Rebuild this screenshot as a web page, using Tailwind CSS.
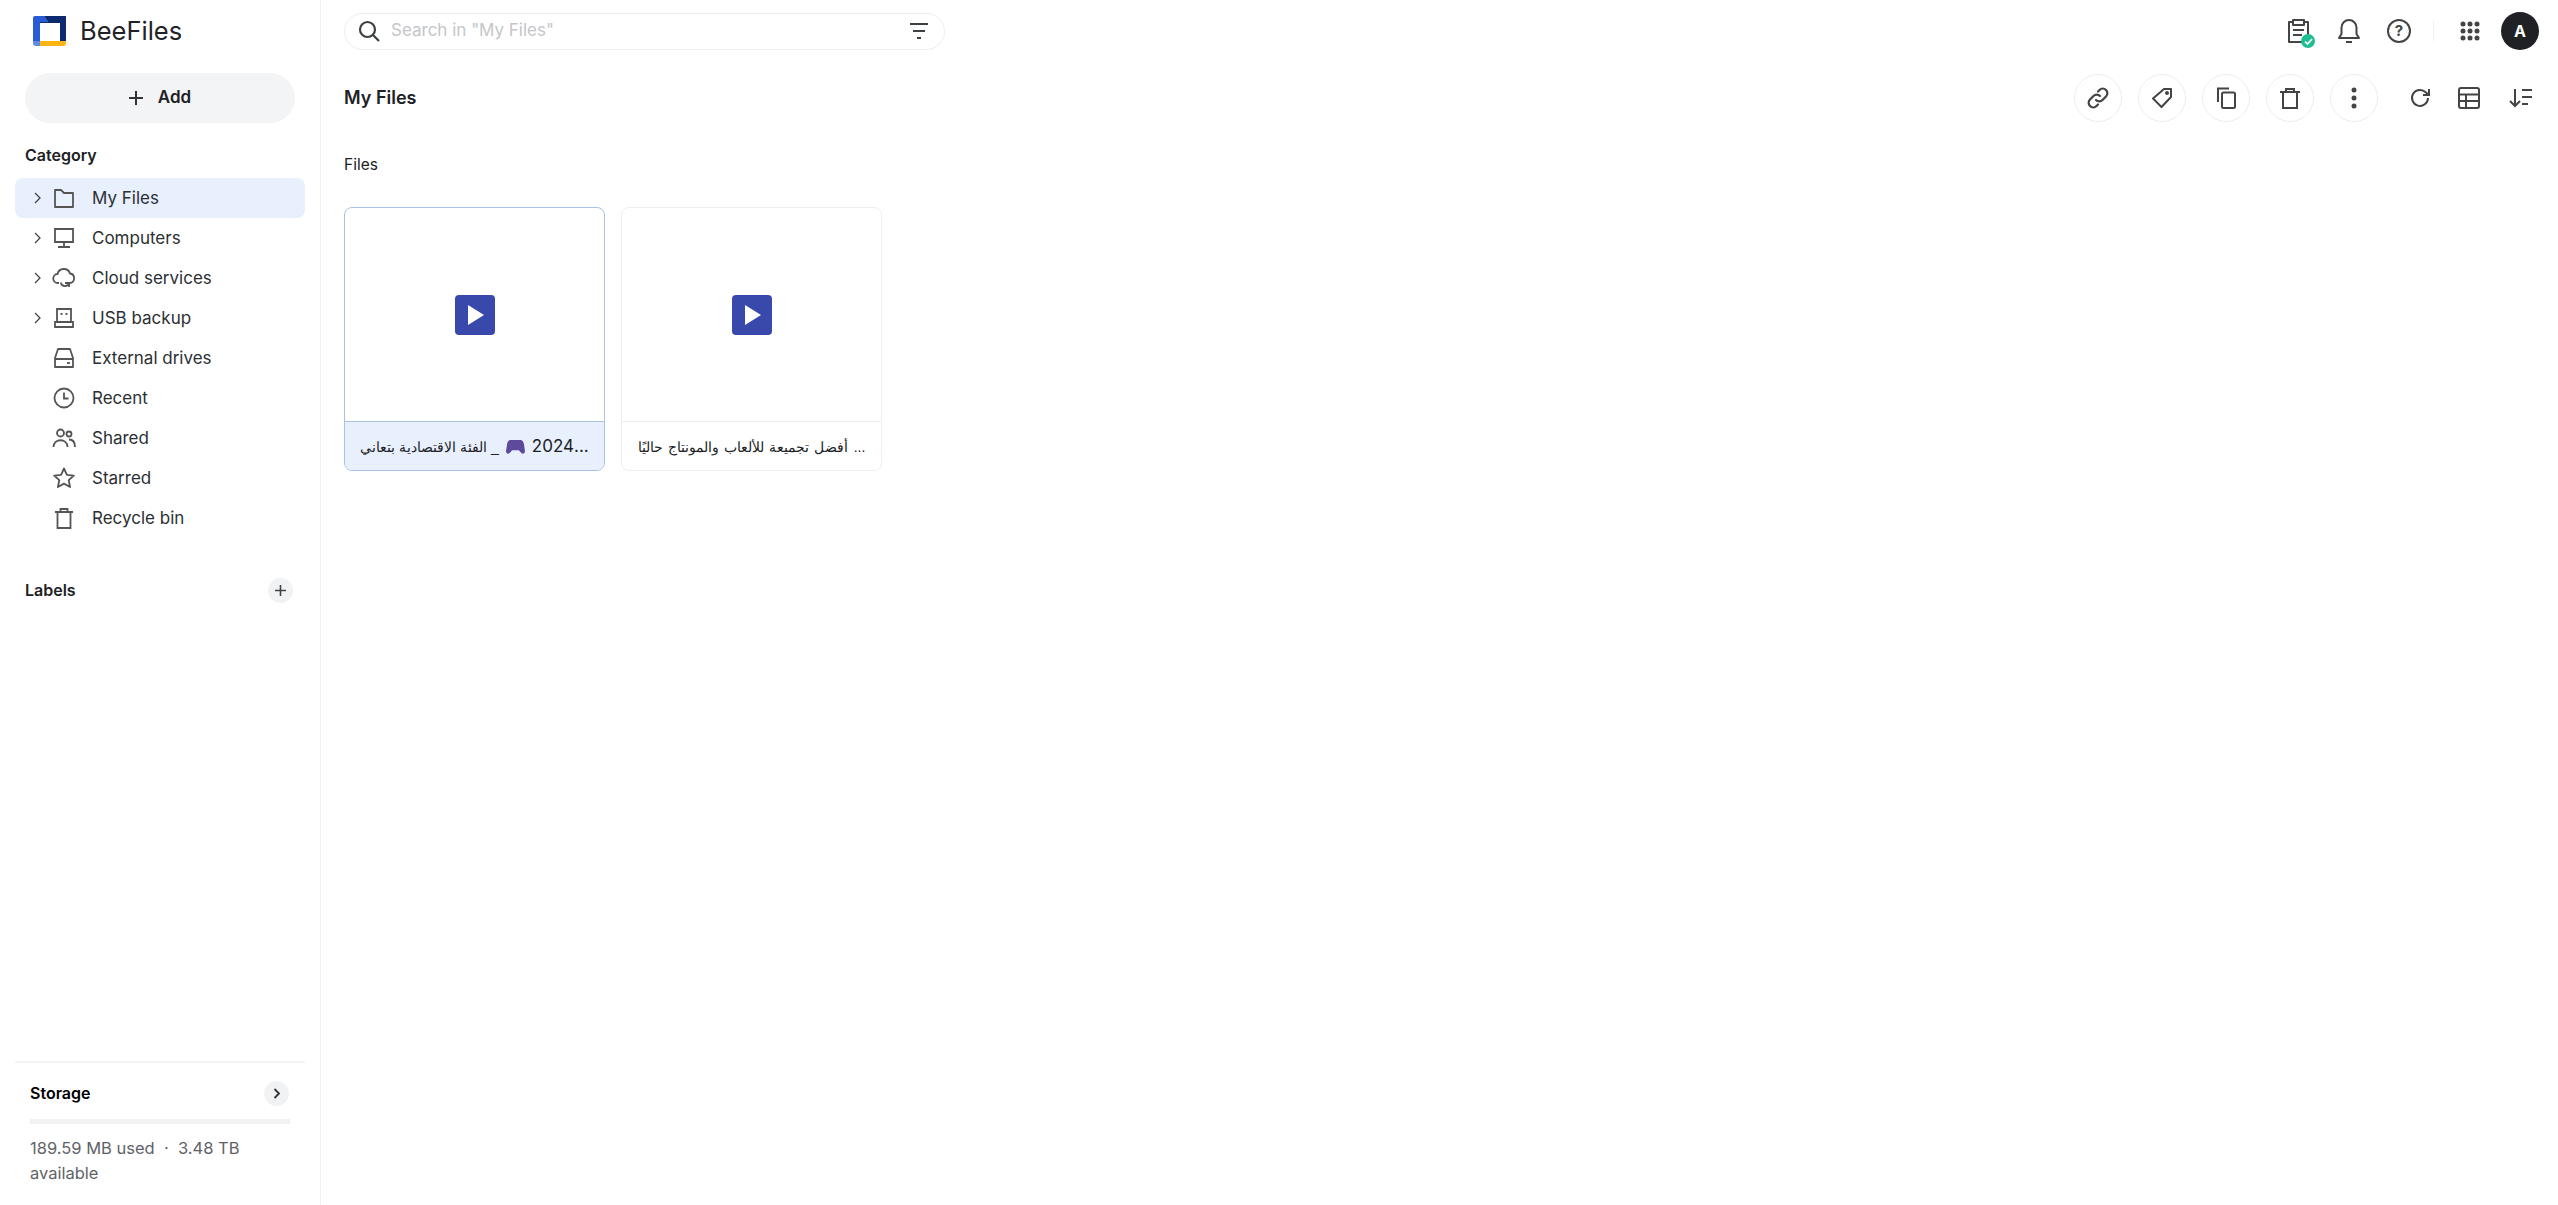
<!DOCTYPE html>
<html lang="en">
  <head>
    <meta charset="UTF-8" />
    <title>BeeFiles</title>
    <script src="https://cdn.jsdelivr.net/npm/@tailwindcss/browser@4"></script>
  </head>
  <body class="h-screen overflow-hidden bg-white text-[#202124] font-[family-name:Inter,sans-serif]">
    <div class="flex h-[1205px]">
      <!-- Sidebar -->
      <aside class="w-[321px] shrink-0 border-r border-[#f1f2f4] flex flex-col">
        <div class="h-[62px] flex items-center pl-[33px] gap-[14px]">
          <svg width="33" height="30" viewBox="0 0 33 30">
            <path d="M0 2a2 2 0 0 1 2-2h9l4 6H7v19H0z" fill="#2a5bd7" />
            <path d="M11 0h22v25h-6V7H7V6h8z" fill="#0b2a6f" />
            <path d="M7 25h26v2a3 3 0 0 1-3 3H7z" fill="#fdb515" />
            <path d="M0 25h7v5H3a3 3 0 0 1-3-3z" fill="#5f8be8" />
          </svg>
          <span class="text-[25.5px] leading-8 text-[#1f2328]">BeeFiles</span>
        </div>
        <div class="px-[25px] mt-[11px]">
          <button class="w-[270px] h-[50px] rounded-full bg-[#f3f4f6] flex items-center justify-center gap-[13px] font-semibold text-[17px] pr-[2px]">
            <svg width="18" height="18" viewBox="0 0 18 18" stroke="#333" stroke-width="2" fill="none"><path d="M9 2v14M2 9h14" /></svg>
            Add
          </button>
        </div>
        <div class="px-[25px] mt-[20px] h-[24px] leading-6 font-semibold text-[16px]">Category</div>
        <nav class="mt-[11px] px-[15px] flex flex-col text-[17px] text-[#2b2f33]">
          <a class="h-[40px] rounded-lg bg-[#e8f0fe] flex items-center">
            <svg class="ml-[19px] mr-[11px]" width="8" height="14" viewBox="0 0 8 14" fill="none" stroke="#444" stroke-width="1.3"><path d="M1 2l5 5-5 5" /></svg>
            <svg width="22" height="22" viewBox="0 0 22 22" fill="none" stroke="#555" stroke-width="1.8"><path d="M2 3h6l3 3h9v14H2z" stroke-linejoin="round" /></svg>
            <span class="ml-[17px] mt-[1px]">My Files</span>
          </a>
          <a class="h-[40px] flex items-center">
            <svg class="ml-[19px] mr-[11px]" width="8" height="14" viewBox="0 0 8 14" fill="none" stroke="#444" stroke-width="1.3"><path d="M1 2l5 5-5 5" /></svg>
            <svg width="22" height="22" viewBox="0 0 22 22" fill="none" stroke="#555" stroke-width="1.8"><path d="M2 2h18v13H2zM11 15v5M5 20h12" /></svg>
            <span class="ml-[17px] mt-[1px]">Computers</span>
          </a>
          <a class="h-[40px] flex items-center">
            <svg class="ml-[19px] mr-[11px]" width="8" height="14" viewBox="0 0 8 14" fill="none" stroke="#444" stroke-width="1.3"><path d="M1 2l5 5-5 5" /></svg>
            <svg width="24" height="22" viewBox="0 0 24 22" fill="none" stroke="#555" stroke-width="1.8" class="-mx-[1px]"><path d="M7 16H6a4.5 4.5 0 0 1-.5-9A6.5 6.5 0 0 1 18 6.500a4.800 4.800 0 0 1 0 9.500h-1M9 15.500c0 4 6 5 8 1M17 20v-4h-4" /></svg>
            <span class="ml-[17px] mt-[1px]">Cloud services</span>
          </a>
          <a class="h-[40px] flex items-center">
            <svg class="ml-[19px] mr-[11px]" width="8" height="14" viewBox="0 0 8 14" fill="none" stroke="#444" stroke-width="1.3"><path d="M1 2l5 5-5 5" /></svg>
            <svg width="22" height="22" viewBox="0 0 22 22" fill="none" stroke="#555" stroke-width="1.8"><path d="M4 2h14v13H4zM2 15h18v5H2z" /><path d="M8.500 6v2M13.500 6v2" /></svg>
            <span class="ml-[17px] mt-[1px]">USB backup</span>
          </a>
          <a class="h-[40px] flex items-center pl-[38px]">
            <svg width="22" height="22" viewBox="0 0 22 22" fill="none" stroke="#555" stroke-width="1.8"><path d="M5 2h12l3 9v9H2v-9zM2 12h18" stroke-linejoin="round" /><path d="M14 16h3" /></svg>
            <span class="ml-[17px] mt-[1px]">External drives</span>
          </a>
          <a class="h-[40px] flex items-center pl-[38px]">
            <svg width="22" height="22" viewBox="0 0 22 22" fill="none" stroke="#555" stroke-width="1.8"><circle cx="11" cy="11" r="9.500" /><path d="M11 5.500V11.500h4.500" /></svg>
            <span class="ml-[17px] mt-[1px]">Recent</span>
          </a>
          <a class="h-[40px] flex items-center pl-[38px]">
            <svg width="22" height="22" viewBox="0 0 22 22" fill="none" stroke="#555" stroke-width="1.8" class="overflow-visible"><circle cx="7.500" cy="6" r="3.500" /><circle cx="16" cy="7" r="2.500" /><path d="M0.500 20c0-9 14-9 14 0M16 12.500c3.500 0 6 2.500 6 7.500" /></svg>
            <span class="ml-[17px] mt-[1px]">Shared</span>
          </a>
          <a class="h-[40px] flex items-center pl-[38px]">
            <svg width="22" height="22" viewBox="0 0 22 22" fill="none" stroke="#555" stroke-width="1.8" class="overflow-visible"><path d="M11 1.500l2.900 6.300 6.900.8-5.100 4.600 1.400 6.800-6.100-3.400-6.100 3.400 1.400-6.800-5.100-4.600 6.900-.8z" stroke-linejoin="round" /></svg>
            <span class="ml-[17px] mt-[1px]">Starred</span>
          </a>
          <a class="h-[40px] flex items-center pl-[38px]">
            <svg width="22" height="22" viewBox="0 0 22 22" fill="none" stroke="#555" stroke-width="1.8"><path d="M2 5h18M7.500 5V2h7v3M4.500 5v16h13V5" /></svg>
            <span class="ml-[17px] mt-[1px]">Recycle bin</span>
          </a>
        </nav>
        <div class="mt-[39px] pl-[25px] pr-[27px] flex items-center justify-between h-[26px]">
          <span class="font-semibold text-[16px]">Labels</span>
          <span class="w-[25px] h-[25px] rounded-full bg-[#f1f2f4] flex items-center justify-center">
            <svg width="11" height="11" viewBox="0 0 11 11" stroke="#444" stroke-width="1.600"><path d="M5.500 0v11M0 5.500h11" /></svg>
          </span>
        </div>
        <div class="mt-auto mx-[15px] border-t-2 border-[#f3f4f6] h-[144px] px-[15px]">
          <div class="flex items-center justify-between mt-[17px] h-[26px]">
            <span class="font-semibold text-[16px] text-black">Storage</span>
            <span class="w-[25px] h-[25px] rounded-full bg-[#f1f2f4] flex items-center justify-center mr-[1px]">
              <svg width="8" height="11" viewBox="0 0 8 11" fill="none" stroke="#333" stroke-width="1.800"><path d="M1.500 1l4.500 4.500L1.500 10" /></svg>
            </span>
          </div>
          <div class="h-[5px] bg-[#f1f2f4] mt-[13px] w-[260px]"></div>
          <p class="mt-[12px] text-[16.500px] leading-[25px] text-[#5f6368]">189.59 MB used &nbsp;·&nbsp; 3.48 TB available</p>
        </div>
      </aside>

      <!-- Main -->
      <main class="flex-1 min-w-0">
        <header class="h-[62px] pl-[23px] pr-[19px] flex items-center justify-between">
          <div class="w-[601px] h-[37px] rounded-full border border-[#eceef0] flex items-center pl-[13px] pr-[15px]">
            <svg width="22" height="22" viewBox="0 0 22 22" fill="none" stroke="#3c4043" stroke-width="2.200"><circle cx="9.500" cy="9.500" r="7.500" /><path d="M15 15l6 6" /></svg>
            <span class="ml-[11px] text-[17px] text-[#c4c6c9]">Search in "My Files"</span>
            <svg class="ml-auto" width="20" height="18" viewBox="0 0 20 18" stroke="#3c4043" fill="none"><path d="M1 2h18" stroke-width="2" /><path d="M4 9h12" stroke-width="2" /><path d="M8 16h4" stroke-width="2" /></svg>
          </div>
          <div class="flex items-center">
            <span class="relative mr-[27px]">
              <svg class="block" width="24" height="26" viewBox="0 0 24 26" fill="none" stroke="#444" stroke-width="2"><path d="M6 4H2v20h19V4h-4M6 2h11v5H6zM6 12h11M6 17h9" stroke-linejoin="round" /></svg>
              <span class="absolute -right-[4px] -bottom-[4px] w-[14px] h-[14px] rounded-full bg-[#1dbf92] flex items-center justify-center">
                <svg width="9" height="7" viewBox="0 0 9 7" fill="none" stroke="#fff" stroke-width="1.700"><path d="M1 3.500L3.500 6 8 1" /></svg>
              </span>
            </span>
            <svg class="mr-[27px]" width="22" height="26" viewBox="0 0 22 26" fill="none" stroke="#444" stroke-width="2"><path d="M1 20h20l-2.500-4V9.500a7.500 7.500 0 0 0-15 0V16zM8 24h6" stroke-linejoin="round" /></svg>
            <span class="mr-[22px] w-[24px] h-[24px] rounded-full border-2 border-[#444] flex items-center justify-center text-[15px] font-bold text-[#444]">?</span>
            <span class="mr-[26px] w-px h-[20px] bg-[#eceef0]"></span>
            <svg class="mr-[21px]" width="20" height="20" viewBox="0 0 20 20" fill="#444"><circle cx="3" cy="3" r="2.500" /><circle cx="10" cy="3" r="2.500" /><circle cx="17" cy="3" r="2.500" /><circle cx="3" cy="10" r="2.500" /><circle cx="10" cy="10" r="2.500" /><circle cx="17" cy="10" r="2.500" /><circle cx="3" cy="17" r="2.500" /><circle cx="10" cy="17" r="2.500" /><circle cx="17" cy="17" r="2.500" /></svg>
            <span class="w-[38px] h-[38px] rounded-full bg-[#202124] text-white font-bold text-[16px] flex items-center justify-center">A</span>
          </div>
        </header>

        <div class="h-[72px] pl-[23px] pr-[25px] flex items-center justify-between">
          <h1 class="text-[18px] font-semibold -mt-[1px]">My Files</h1>
          <div class="flex items-center">
            <div class="flex gap-[16px]">
              <button class="w-[48px] h-[48px] rounded-full border border-[#eceef0] flex items-center justify-center">
                <svg width="22" height="22" viewBox="0 0 22 22" fill="none" stroke="#444" stroke-width="2.200" stroke-linecap="round"><path d="M9 13a4.500 4.500 0 0 0 6.500 0l3.500-3.500A4.500 4.500 0 0 0 12.500 3L11 4.500" /><path d="M13 9a4.500 4.500 0 0 0-6.500 0L3 12.500A4.500 4.500 0 0 0 9.500 19l1.500-1.500" /></svg>
              </button>
              <button class="w-[48px] h-[48px] rounded-full border border-[#eceef0] flex items-center justify-center">
                <svg width="22" height="22" viewBox="0 0 22 22" fill="none" stroke="#444" stroke-width="2"><path d="M13 2h7v8L10.500 20 2 11.500z" stroke-linejoin="round" /><circle cx="16" cy="6" r="1" fill="#444" /></svg>
              </button>
              <button class="w-[48px] h-[48px] rounded-full border border-[#eceef0] flex items-center justify-center">
                <svg width="22" height="22" viewBox="0 0 22 22" fill="none" stroke="#444" stroke-width="2"><path d="M3 15V1.500h11" /><rect x="7" y="5.500" width="13" height="15.500" rx="1.500" /></svg>
              </button>
              <button class="w-[48px] h-[48px] rounded-full border border-[#eceef0] flex items-center justify-center">
                <svg width="22" height="22" viewBox="0 0 22 22" fill="none" stroke="#444" stroke-width="2"><path d="M1 5h20M7 5V2h8v3M4 5v16h14V5" /></svg>
              </button>
              <button class="w-[48px] h-[48px] rounded-full border border-[#eceef0] flex items-center justify-center">
                <svg width="6" height="22" viewBox="0 0 6 22" fill="#444"><circle cx="3" cy="3" r="2.500" /><circle cx="3" cy="11" r="2.500" /><circle cx="3" cy="19" r="2.500" /></svg>
              </button>
            </div>
            <svg class="ml-[31px]" width="22" height="22" viewBox="0 0 22 22" fill="none" stroke="#444" stroke-width="2"><path d="M19 11a8 8 0 1 1-2.300-5.700L20 8" /><path d="M20 2v6h-6" /></svg>
            <svg class="ml-[27px]" width="22" height="22" viewBox="0 0 22 22" fill="none" stroke="#444" stroke-width="2"><rect x="1" y="1" width="20" height="20" rx="2" /><path d="M1 7.500h20M1 14h20M8 7.500V21" /></svg>
            <svg class="ml-[29px]" width="24" height="22" viewBox="0 0 24 22" fill="none" stroke="#444" stroke-width="2"><path d="M6 2v17M1 14l5 5 5-5M13 3h10M13 10h10M13 17h6" /></svg>
          </div>
        </div>

        <div class="pl-[23px] mt-[21px] text-[15.500px] leading-5">Files</div>

        <div class="pl-[23px] mt-[32px] flex gap-[16px]">
          <div class="w-[261px] h-[264px] rounded-lg border border-[#a9c1e6] flex flex-col overflow-hidden">
            <div class="flex-1 flex items-center justify-center">
              <span class="w-[40px] h-[40px] rounded bg-[#3949ab] flex items-center justify-center">
                <svg width="16" height="20" viewBox="0 0 16 20" fill="#fff" class="ml-[2px]"><path d="M0 0l16 10L0 20z" /></svg>
              </span>
            </div>
            <div dir="rtl" class="h-[49px] shrink-0 border-t border-[#a9c1e6] bg-[#e8f0fe] flex items-center justify-center gap-[7px] pt-[2px] whitespace-nowrap font-[family-name:'Liberation_Sans',sans-serif]">
              <span class="font-[family-name:Inter,sans-serif] text-[17px]">...2024</span>
              <svg width="19" height="16" viewBox="0 0 20 17" fill="#5d4a9c"><path d="M5 1h10c2.500 0 3.500 2 4 4.500l1 7c.3 3-2.500 4-4 2L13.500 12h-7L4 14.500c-1.500 2-4.300 1-4-2l1-7C1.500 3 2.500 1 5 1z" /></svg>
              <span class="text-[14px]">_ الفئة الاقتصادية بتعاني</span>
            </div>
          </div>
          <div class="w-[261px] h-[264px] rounded-lg border border-[#eceef0] flex flex-col overflow-hidden">
            <div class="flex-1 flex items-center justify-center">
              <span class="w-[40px] h-[40px] rounded bg-[#3949ab] flex items-center justify-center">
                <svg width="16" height="20" viewBox="0 0 16 20" fill="#fff" class="ml-[2px]"><path d="M0 0l16 10L0 20z" /></svg>
              </span>
            </div>
            <div dir="rtl" class="h-[49px] shrink-0 border-t border-[#eceef0] flex items-center justify-center pt-[2px] text-[14px] [word-spacing:1.3px] whitespace-nowrap font-[family-name:'Liberation_Sans',sans-serif]">... أفضل تجميعة للألعاب والمونتاج حاليًا</div>
          </div>
        </div>
      </main>
    </div>
  </body>
</html>
